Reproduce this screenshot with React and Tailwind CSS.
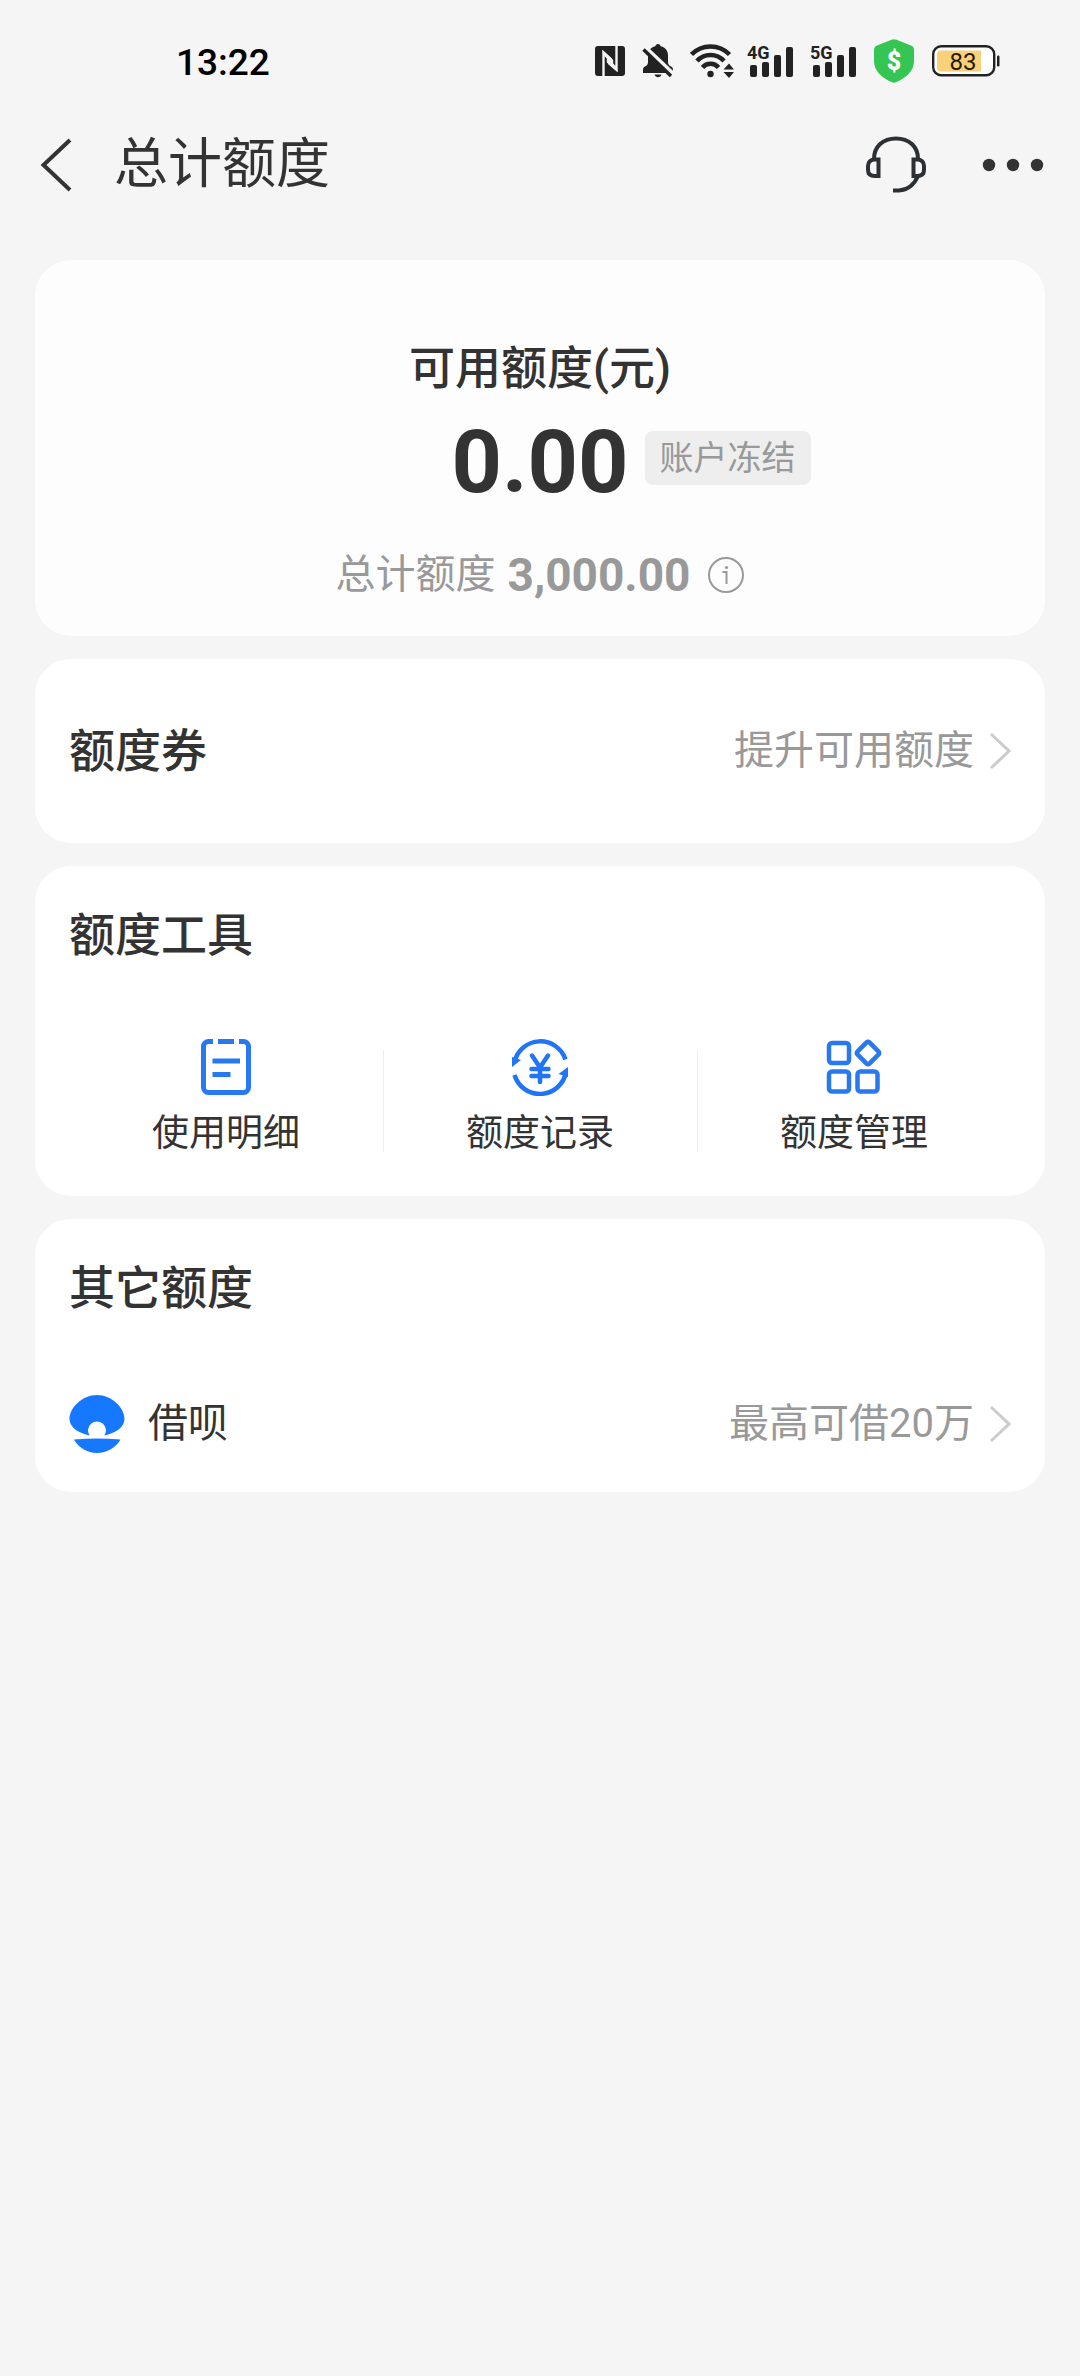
import React from 'react';

const TOOLS = [
  { key: 'details', label: '使用明细', Icon: DetailsIcon },
  { key: 'records', label: '额度记录', Icon: RecordsIcon },
  { key: 'manage', label: '额度管理', Icon: ManageIcon },
];

export default function App() {
  return (
    <div className="min-h-screen bg-[#f5f5f5] text-[#333] font-[Roboto,'Noto_Sans_CJK_SC',sans-serif]">
      <StatusBar />
      <TitleBar />

      <main className="flex flex-col gap-[23px] px-[35px] pt-[52px] pb-10">
        <QuotaSummary />

        {/* Coupons */}
        <section className="flex items-center justify-between rounded-[36px] bg-white px-[34px] h-[184px]">
          <SectionTitle>额度券</SectionTitle>
          <LinkMore label="提升可用额度" />
        </section>

        {/* Tools */}
        <section className="rounded-[36px] bg-white px-[34px] pt-[39px] pb-8">
          <SectionTitle>额度工具</SectionTitle>
          <div className="mt-[73px] grid grid-cols-3">
            {TOOLS.map(({ key, label, Icon }, i) => (
              <div key={key} className="relative">
                {i > 0 && <span className="absolute left-0 top-3 h-[102px] w-px bg-[#eee]" />}
                <button type="button" className="flex w-full flex-col items-center gap-2">
                  <Icon />
                  <span className="text-[37px] leading-[60px]">{label}</span>
                </button>
              </div>
            ))}
          </div>
        </section>

        {/* Other quotas */}
        <section className="rounded-[36px] bg-white px-[34px] pt-[39px] pb-[38px]">
          <SectionTitle>其它额度</SectionTitle>
          <div className="mt-[76px] flex items-center justify-between">
            <div className="flex items-center gap-[23px]">
              <JiebeiLogo />
              <span className="text-[40px] leading-[60px]">借呗</span>
            </div>
            <LinkMore label="最高可借20万" />
          </div>
        </section>
      </main>
    </div>
  );
}

function StatusBar() {
  return (
    <div className="flex h-[122px] items-center justify-between pl-[176px] pr-20">
      <time className="mt-1 text-[37px] leading-10 font-medium text-black">13:22</time>
      <div className="flex items-center">
        <NfcIcon />
        <BellOffIcon />
        <WifiIcon />
        <SignalIcon label="4G" />
        <SignalIcon label="5G" />
        <ShieldIcon />
        <BatteryIcon level="83" />
      </div>
    </div>
  );
}

function TitleBar() {
  return (
    <header className="flex h-[86px] items-center pl-10 pr-9">
      <button type="button" aria-label="返回">
        <svg width="32" height="54" viewBox="0 0 32 54" fill="none" stroke="#333" strokeWidth="4">
          <path d="M30 2 3.500 27 30 52" />
        </svg>
      </button>
      <h1 className="ml-[42px] flex-1 text-[54px] leading-[80px]">总计额度</h1>
      <button type="button" aria-label="客服">
        <HeadsetIcon />
      </button>
      <button type="button" aria-label="更多" className="ml-14">
        <svg width="62" height="14" viewBox="0 0 62 14" fill="#333">
          <circle cx="7" cy="7" r="6.200" />
          <circle cx="31" cy="7" r="6.200" />
          <circle cx="55" cy="7" r="6.200" />
        </svg>
      </button>
    </header>
  );
}

function QuotaSummary() {
  return (
    <section className="rounded-[36px] bg-[#fdfdfd] px-[35px] pt-[76px] pb-[31px] text-center">
      <h2 className="text-[46px] leading-[64px] font-medium">可用额度(元)</h2>
      {/* number stays centered, the tag hangs to its right */}
      <div className="mt-3 grid grid-cols-[1fr_auto_1fr] items-center">
        <span />
        <span className="text-[88px] leading-[100px] font-bold">0.00</span>
        <span className="mb-2 ml-4 justify-self-start rounded-lg bg-[#eee] px-[15px] text-[34px] leading-[54px] text-[#999]">
          账户冻结
        </span>
      </div>
      <div className="mt-[33px] flex items-center justify-center text-[#999]">
        <span className="text-[40px] leading-[60px]">总计额度</span>
        <span className="ml-3 text-[46px] leading-[60px] font-bold">3,000.00</span>
        <button type="button" aria-label="额度说明" className="ml-4">
          <svg width="38" height="38" viewBox="0 0 38 38" fill="none" stroke="#999" strokeWidth="2">
            <circle cx="19" cy="19" r="17" />
            <path d="M15.500 16H19.500V28" />
            <circle cx="19.500" cy="11.500" r="1.600" fill="#999" stroke="none" />
          </svg>
        </button>
      </div>
    </section>
  );
}

function SectionTitle({ children }) {
  return <h2 className="text-[46px] leading-[60px] font-medium">{children}</h2>;
}

function LinkMore({ label }) {
  return (
    <a href="#" className="flex items-center gap-[15px] text-[#999]">
      <span className="text-[40px] leading-[60px]">{label}</span>
      <svg width="22" height="38" viewBox="0 0 22 38" fill="none" stroke="#ccc" strokeWidth="3">
        <path d="M2 2 20 19 2 36" />
      </svg>
    </a>
  );
}

/* ---- status bar icons ---- */

function NfcIcon() {
  return (
    <svg width="30" height="30" viewBox="0 0 30 30">
      <rect width="30" height="30" rx="3" fill="#222" />
      <path d="M8.500 30V6.500L17 14.500V19" fill="none" stroke="#f5f5f5" strokeWidth="2.400" />
      <path d="M21.500 0V23.500L13 16V11" fill="none" stroke="#f5f5f5" strokeWidth="2.400" />
      <path d="M7.500 4 17 12.500V17L8 9ZM22.500 26 13 18V13L22 21Z" fill="#f5f5f5" />
    </svg>
  );
}

function BellOffIcon() {
  return (
    <svg className="ml-[17px]" width="32" height="34" viewBox="0 0 32 34">
      <path
        d="M16 0c1.500 0 2.500 1 2.700 2.300C23.500 3.500 26 7 26 11.500V18c0 2 1 3.500 3 4.500 1.500.7 2 1.800 2 3.500v3H1v-3c0-1.700.6-2.800 2-3.500 2-1 3-2.500 3-4.500v-6.500C6 7 8.500 3.500 13.300 2.300 13.500 1 14.500 0 16 0Z"
        fill="#222"
      />
      <path d="M12.500 30.500h7c-.6 1.800-1.900 2.700-3.500 2.700s-2.900-.9-3.500-2.700Z" fill="#222" />
      <path d="M3.500 3.500 32 30.500" stroke="#f5f5f5" strokeWidth="4" />
      <path d="M1.500 5.500 29 32" stroke="#222" strokeWidth="3.500" />
    </svg>
  );
}

function WifiIcon() {
  return (
    <svg className="ml-4" width="44" height="34" viewBox="0 0 44 34" fill="none" stroke="#222" strokeWidth="4.500">
      <path d="M1.500 10.500A26.500 26.500 0 0 1 39.500 10.500" />
      <path d="M7 17A18 18 0 0 1 34 17" />
      <path d="M12.500 23.500A10.500 10.500 0 0 1 28.500 23.500" />
      <circle cx="20.500" cy="30" r="3.200" fill="#222" stroke="none" />
      <path d="M33.500 25.500 39 19.500 44 25.500ZM33.500 28 39 34 44 28Z" fill="#222" stroke="none" />
    </svg>
  );
}

function SignalIcon({ label }) {
  return (
    <svg className="ml-[11px] mr-1" width="48" height="46" viewBox="-2 -6 48 46" fill="#222">
      <text x="0" y="15" fontSize="18" fontWeight="700" fontFamily="Roboto, sans-serif">
        {label}
      </text>
      <rect x="3" y="21" width="7" height="12" rx="2" />
      <rect x="15" y="18" width="7" height="15" rx="2" />
      <rect x="27" y="11" width="7" height="22" rx="2" />
      <rect x="39" y="3" width="7" height="30" rx="2" />
    </svg>
  );
}

function ShieldIcon() {
  return (
    <svg className="ml-[14px]" width="40" height="44" viewBox="0 0 40 44">
      <path
        d="M17.500.800a6 6 0 0 1 5 0L37 6.500Q40 7.800 40 11V22C40 32 32 39 22 43.300Q20 44 18 43.300C8 39 0 32 0 22V11Q0 7.800 3 6.500Z"
        fill="#34c552"
      />
      <text x="20" y="31" textAnchor="middle" fontSize="25" fontWeight="900" fill="#fff" fontFamily="Roboto, sans-serif">
        $
      </text>
    </svg>
  );
}

function BatteryIcon({ level }) {
  return (
    <svg className="ml-[18px]" width="68" height="32" viewBox="0 0 68 32">
      <rect x="1.200" y="1.200" width="61" height="29" rx="8" fill="#fff" stroke="#222" strokeWidth="2.400" />
      <path d="M9 5.500H49V26.500H9a4 4 0 0 1-4-4v-13a4 4 0 0 1 4-4Z" fill="#fad07a" />
      <rect x="65" y="10.500" width="2.500" height="11" rx="1.200" fill="#222" />
      <text x="31" y="24.500" textAnchor="middle" fontSize="24" fill="#221a08" fontFamily="Roboto, sans-serif">
        {level}
      </text>
    </svg>
  );
}

/* ---- page icons ---- */

function HeadsetIcon() {
  return (
    <svg width="60" height="58" viewBox="0 0 60 58" fill="none" stroke="#2b3035" strokeWidth="4">
      <path d="M8 23C8 10.500 17 2.500 30 2.500S52 10.500 52 23" />
      <path d="M12.500 23.500H9C4.500 23.500 2 26 2 30v4c0 4 2.500 6 7 6h3.500Z" />
      <path d="M47.500 23.500H51c4.500 0 7 2.500 7 6.500v4c0 4-2.500 6-7 6H47.500Z" />
      <path d="M52 40C48 49 41 54 33 54.500H27" />
    </svg>
  );
}

function DetailsIcon() {
  return (
    <svg width="58" height="58" viewBox="0 0 58 58" fill="none" stroke="#2878f0" strokeWidth="5">
      <path d="M16 3.500H11.500A5 5 0 0 0 6.500 8.500V49.500a5 5 0 0 0 5 5H46.500a5 5 0 0 0 5-5V8.500a5 5 0 0 0-5-5H42M21 3.500H37" />
      <path d="M15.500 23H43M15.500 36.500H33.500" />
    </svg>
  );
}

function RecordsIcon() {
  return (
    <svg width="58" height="58" viewBox="0 0 58 58" fill="none" stroke="#1f75f5" strokeWidth="4.500">
      <path d="M3.500 24A26.500 26.500 0 0 1 54.500 21.500" />
      <path d="M3.500 37A26.500 26.500 0 0 0 55 34" />
      <path d="M1 19V29L10 22ZM57 39V29L47.500 36Z" fill="#1f75f5" stroke="none" />
      <path d="M21 17.500 29 29.500 37 17.500M29 29.500V44M20.500 31H37.500M20.500 38H37.500" strokeLinecap="round" />
    </svg>
  );
}

function ManageIcon() {
  return (
    <svg width="58" height="58" viewBox="0 0 58 58" fill="none" stroke="#2878f0" strokeWidth="4.500">
      <rect x="4" y="5" width="20" height="20" rx="3" />
      <rect x="4" y="33.500" width="20" height="20" rx="3" />
      <rect x="32.500" y="33.500" width="20" height="20" rx="3" />
      <rect x="34.500" y="6.500" width="17" height="17" rx="2" transform="rotate(45 43 15)" />
    </svg>
  );
}

function JiebeiLogo() {
  return (
    <svg width="56" height="58" viewBox="0 0 56 58" fill="#1677ff">
      <path d="M28 0C43 0 55.500 13 55.500 24 55.500 33 45 38.500 35.500 40.500A9 9 0 1 0 20.500 40.500C11 38.500.5 33 .5 24 .5 13 13 0 28 0Z" />
      <path d="M5 44.500Q28 42.500 51.500 44.500C47 52.500 38 58 28 58S9.500 52.500 5 44.500Z" />
    </svg>
  );
}
